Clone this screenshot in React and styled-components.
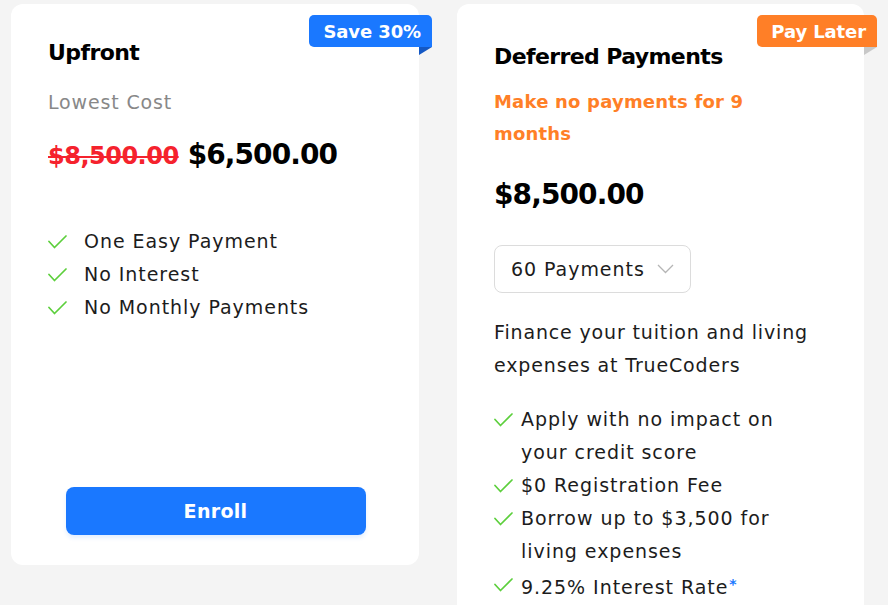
import React from "react";
import styled, { createGlobalStyle } from "styled-components";

const Global = createGlobalStyle`
  html, body { margin: 0; padding: 0; background: #f4f4f4; }
  body { font-family: "DejaVu Sans", "Noto Sans", sans-serif; color: #1c1c1c; }
  * { box-sizing: border-box; }
`;

const Page = styled.div`
  display: flex;
  align-items: flex-start;
  gap: 38px;
  padding: 4px 0 0 11px;
  height: 605px;
  overflow: hidden;
`;

const Card = styled.div`
  position: relative;
  width: ${(p) => p.$w}px;
  min-height: ${(p) => p.$h}px;
  background: #fff;
  border-radius: 12px;
  padding: 33px 36px 30px 37px;
  display: flex;
  flex-direction: column;
`;

const Badge = styled.div`
  position: absolute;
  top: 11px;
  right: -13px;
  height: 32px;
  padding: 0 11px 0 14px;
  display: flex;
  align-items: center;
  background: ${(p) => p.$bg};
  color: #fff;
  font-size: 18px;
  font-weight: 700;
  letter-spacing: -0.1px;
  border-radius: 5px 5px 0 5px;
  &::after {
    content: "";
    position: absolute;
    right: 0;
    top: 32px;
    border-top: 8px solid ${(p) => p.$fold};
    border-right: 13px solid transparent;
  }
`;

const Title = styled.h2`
  margin: ${(p) => p.$mt || 0}px 0 0;
  font-size: 22px;
  line-height: 30px;
  font-weight: 700;
  color: #000;
  letter-spacing: -0.6px;
`;

const Subtitle = styled.div`
  margin-top: ${(p) => p.$mt}px;
  font-size: ${(p) => (p.$accent ? 18 : 19)}px;
  line-height: 32px;
  font-weight: ${(p) => (p.$accent ? 700 : 400)};
  color: ${(p) => (p.$accent ? "#ff7f27" : "#888")};
  max-width: ${(p) => p.$max || 400}px;
  letter-spacing: ${(p) => (p.$accent ? "0.2px" : "0.85px")};
`;

const PriceRow = styled.div`
  margin-top: ${(p) => p.$mt}px;
  display: flex;
  align-items: baseline;
  gap: 9px;
  line-height: 40px;
`;

const OldPrice = styled.span`
  font-size: 24px;
  font-weight: 700;
  color: #f5222d;
  text-decoration: line-through;
  text-decoration-thickness: 2px;
  letter-spacing: -0.5px;
`;

const Price = styled.span`
  font-size: 28px;
  font-weight: 700;
  color: #000;
  letter-spacing: -0.9px;
`;

const List = styled.ul`
  list-style: none;
  margin: ${(p) => p.$mt}px 0 0;
  padding: 0;
`;

const Item = styled.li`
  display: flex;
  align-items: flex-start;
  gap: ${(p) => p.$gap}px;
  font-size: 19px;
  line-height: 33px;
  color: #1c1c1c;
  letter-spacing: 0.95px;
`;

const CheckBox = styled.span`
  flex: none;
  height: 33px;
  display: flex;
  align-items: center;
`;

const ItemText = styled.span`
  max-width: ${(p) => p.$max || 400}px;
`;

const Star = styled.span`
  color: #1a78ff;
  font-size: 14px;
  font-weight: 700;
  vertical-align: 5px;
  margin-left: 1px;
`;

const Select = styled.div`
  margin-top: 30px;
  align-self: flex-start;
  height: 48px;
  width: 197px;
  border: 1px solid #dcdcdc;
  border-radius: 8px;
  display: flex;
  align-items: center;
  gap: 12px;
  padding: 0 0 0 16px;
  font-size: 19px;
  color: #1c1c1c;
  letter-spacing: 0.95px;
`;

const Paragraph = styled.p`
  margin: 23px 0 0;
  font-size: 19px;
  line-height: 33px;
  color: #1c1c1c;
  max-width: 330px;
  letter-spacing: 0.85px;
`;

const Enroll = styled.button`
  margin-top: auto;
  align-self: center;
  width: 300px;
  height: 48px;
  border: none;
  border-radius: 8px;
  background: #1a78ff;
  color: #fff;
  font-family: inherit;
  font-size: 19px;
  font-weight: 700;
  letter-spacing: 0.3px;
  box-shadow: 0 3px 4px rgba(26, 120, 255, 0.12);
  cursor: pointer;
`;

const Check = () => (
  <svg width="19" height="14" viewBox="0 0 19 14" fill="none">
    <path d="M1 6.5 L6.5 12.5 L18 1" stroke="#5ccf3c" strokeWidth="1.7" strokeLinecap="round" strokeLinejoin="round" />
  </svg>
);

const Chevron = () => (
  <svg width="17" height="10" viewBox="0 0 17 10" fill="none">
    <path d="M1 1 L8.5 8.5 L16 1" stroke="#b5b5b5" strokeWidth="1.3" />
  </svg>
);

const upfront = ["One Easy Payment", "No Interest", "No Monthly Payments"];
const deferred = [
  "Apply with no impact on your credit score",
  "$0 Registration Fee",
  "Borrow up to $3,500 for living expenses",
];

export default function App() {
  return (
    <>
      <Global />
      <Page>
        <Card $w={408} $h={561}>
          <Badge $bg="#1a78ff" $fold="#1458c4">Save 30%</Badge>
          <Title $mt={1}>Upfront</Title>
          <Subtitle $mt={18}>Lowest Cost</Subtitle>
          <PriceRow $mt={17}>
            <OldPrice>$8,500.00</OldPrice>
            <Price>$6,500.00</Price>
          </PriceRow>
          <List $mt={49}>
            {upfront.map((t) => (
              <Item key={t} $gap={17}>
                <CheckBox><Check /></CheckBox>
                <ItemText>{t}</ItemText>
              </Item>
            ))}
          </List>
          <Enroll>Enroll</Enroll>
        </Card>
        <Card $w={407} $h={700}>
          <Badge $bg="#ff7f27" $fold="#c8c8c8">Pay Later</Badge>
          <Title $mt={5}>Deferred Payments</Title>
          <Subtitle $mt={14} $accent $max={270}>Make no payments for 9 months</Subtitle>
          <PriceRow $mt={25}>
            <Price>$8,500.00</Price>
          </PriceRow>
          <Select>
            <span>60 Payments</span>
            <Chevron />
          </Select>
          <Paragraph>Finance your tuition and living expenses at TrueCoders</Paragraph>
          <List $mt={21}>
            {deferred.map((t) => (
              <Item key={t} $gap={8}>
                <CheckBox><Check /></CheckBox>
                <ItemText $max={285}>{t}</ItemText>
              </Item>
            ))}
            <Item $gap={8}>
              <CheckBox><Check /></CheckBox>
              <ItemText>9.25% Interest Rate<Star>*</Star></ItemText>
            </Item>
          </List>
        </Card>
      </Page>
    </>
  );
}
